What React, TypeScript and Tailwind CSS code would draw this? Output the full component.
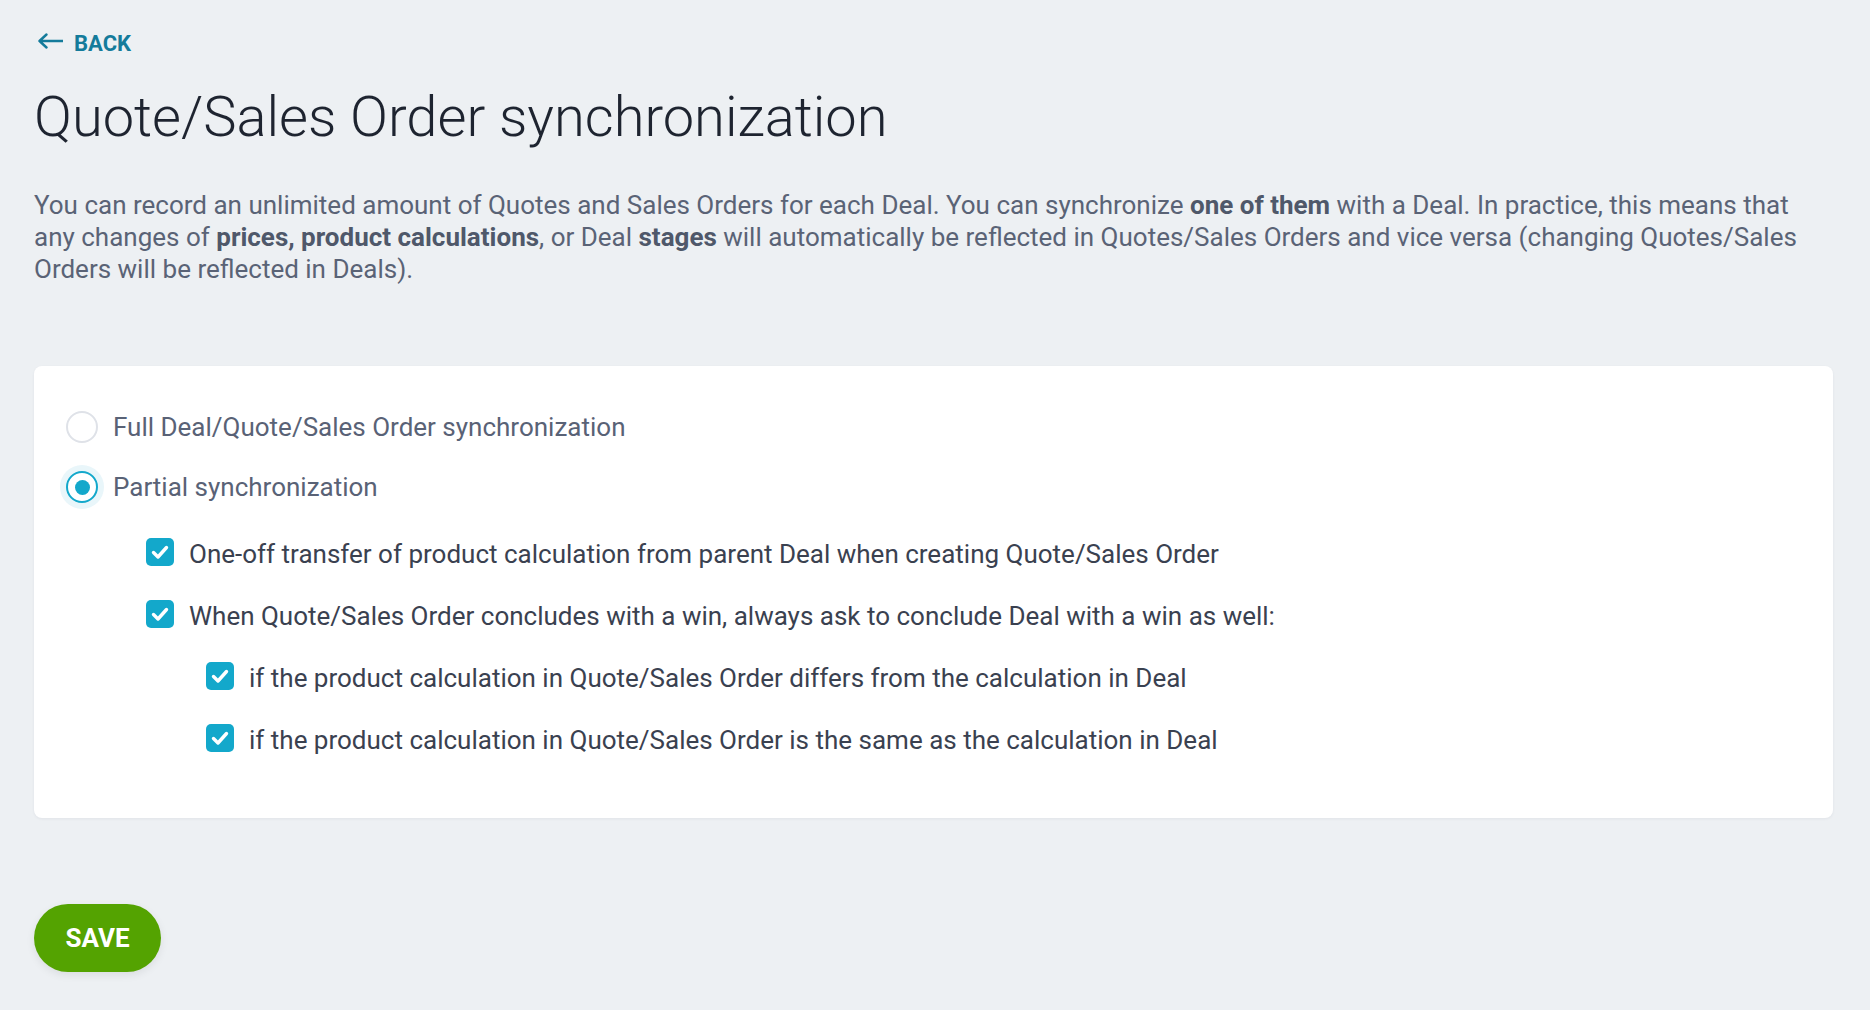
import React from "react";

function Check() {
  return (
    <span className="flex h-[28px] w-[28px] shrink-0 items-center justify-center rounded-[5px] bg-[#13a8cb]">
      <svg width="28" height="28" viewBox="0 0 28 28" fill="none">
        <path d="M7.5 14.5 L12 19 L20.5 9.5" stroke="#fff" strokeWidth="3.4" strokeLinecap="round" strokeLinejoin="round" />
      </svg>
    </span>
  );
}

function CheckRow({ children }: { children: React.ReactNode }) {
  return (
    <div className="flex items-start gap-[15px]">
      <Check />
      <span className="text-[26px] leading-[32px] text-[#3a4150]">{children}</span>
    </div>
  );
}

export default function App() {
  return (
    <div
      className="min-h-[1010px] w-full bg-[#edf0f3] pl-[34px] pr-[37px] pt-[30px]"
      style={{ fontFamily: "Roboto, 'Liberation Sans', sans-serif" }}
    >
      <div className="flex h-[28px] items-center gap-[11px] pl-[4px] text-[#147b9b]">
        <svg width="25" height="16" viewBox="0 0 25 16" fill="none" className="-mt-[6px]">
          <path d="M1.5 8 H24.5 M8.5 1.5 L1.5 8 L8.5 14.5" stroke="#147b9b" strokeWidth="2.4" strokeLinecap="round" strokeLinejoin="round" />
        </svg>
        <span className="text-[22px] font-bold leading-[28px]">BACK</span>
      </div>

      <h1 className="mt-[27px] text-[56px] font-light leading-[64px] text-[#1e2430]">
        Quote/Sales Order synchronization
      </h1>

      <p className="mt-[40px] text-[26px] leading-[32px] text-[#5a6376]">
        You can record an unlimited amount of Quotes and Sales Orders for each Deal. You can synchronize{" "}
        <b className="font-bold text-[#4f586a]">one of them</b> with a Deal. In practice, this means that any changes of{" "}
        <b className="font-bold text-[#4f586a]">prices, product calculations</b>, or Deal{" "}
        <b className="font-bold text-[#4f586a]">stages</b> will automatically be reflected in Quotes/Sales Orders and vice
        versa (changing Quotes/Sales Orders will be reflected in Deals).
      </p>

      <div className="mt-[81px] rounded-[8px] bg-white pb-[62px] pl-[32px] pt-[45px] shadow-[0_1px_3px_rgba(30,40,60,0.06)]">
        <div className="flex flex-col gap-[28px]">
          <label className="flex items-center gap-[15px]">
            <span className="h-[32px] w-[32px] shrink-0 rounded-full border-2 border-[#dfe2e8] bg-white" />
            <span className="text-[26px] leading-[32px] text-[#596276]">Full Deal/Quote/Sales Order synchronization</span>
          </label>
          <label className="flex items-center gap-[15px]">
            <span className="relative h-[32px] w-[32px] shrink-0">
              <span className="absolute -left-[6px] -top-[6px] h-[44px] w-[44px] rounded-full bg-[#e9f6fa]" />
              <span className="absolute inset-0 flex items-center justify-center rounded-full border-[2.5px] border-[#13a8cb] bg-white">
                <span className="h-[15px] w-[15px] rounded-full bg-[#13a8cb]" />
              </span>
            </span>
            <span className="text-[26px] leading-[32px] text-[#596276]">Partial synchronization</span>
          </label>
        </div>

        <div className="mt-[35px] flex flex-col gap-[30px] pl-[80px]">
          <CheckRow>One-off transfer of product calculation from parent Deal when creating Quote/Sales Order</CheckRow>
          <CheckRow>When Quote/Sales Order concludes with a win, always ask to conclude Deal with a win as well:</CheckRow>
          <div className="flex flex-col gap-[30px] pl-[60px]">
            <CheckRow>if the product calculation in Quote/Sales Order differs from the calculation in Deal</CheckRow>
            <CheckRow>if the product calculation in Quote/Sales Order is the same as the calculation in Deal</CheckRow>
          </div>
        </div>
      </div>

      <button className="mt-[86px] flex h-[68px] w-[127px] items-center justify-center rounded-full bg-[#54a301] text-[26px] font-bold text-white shadow-[0_3px_8px_rgba(0,0,0,0.08)]">
        SAVE
      </button>
    </div>
  );
}
